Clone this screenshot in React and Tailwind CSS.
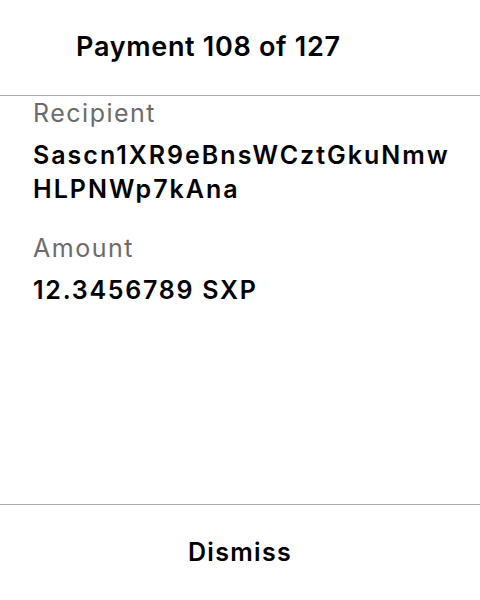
function Field({ label, lines, className, valueTracking }) {
  return (
    <div className={className}>
      <div className="text-[25px] leading-[34px] tracking-[1.5px] text-[#6b6b6b]">{label}</div>
      <div className={`mt-[8px] text-[25px] font-semibold leading-[34px] text-black ${valueTracking}`}>
        {lines.map((l, i) => (
          <div key={i}>{l}</div>
        ))}
      </div>
    </div>
  )
}

export default function App() {
  return (
    <div
      className="flex h-[600px] w-[480px] flex-col bg-white text-black"
      style={{ fontFamily: 'Inter, "Noto Sans", sans-serif' }}
    >
      <div className="flex h-[96px] shrink-0 items-center border-b border-[#ababab] pl-[76px]">
        <span className="text-[27px] font-semibold tracking-[0.7px]">Payment 108 of 127</span>
      </div>
      <div className="flex-1 px-[33px]">
        <Field
          label="Recipient"
          lines={['Sascn1XR9eBnsWCztGkuNmw', 'HLPNWp7kAna']}
          valueTracking="tracking-[2px]"
        />
        <Field
          className="mt-[25px]"
          label="Amount"
          lines={['12.3456789 SXP']}
          valueTracking="tracking-[1.75px]"
        />
      </div>
      <div className="flex h-[96px] shrink-0 items-center justify-center border-t border-[#ababab]">
        <button className="text-[25px] font-semibold tracking-[1.3px]">Dismiss</button>
      </div>
    </div>
  )
}
